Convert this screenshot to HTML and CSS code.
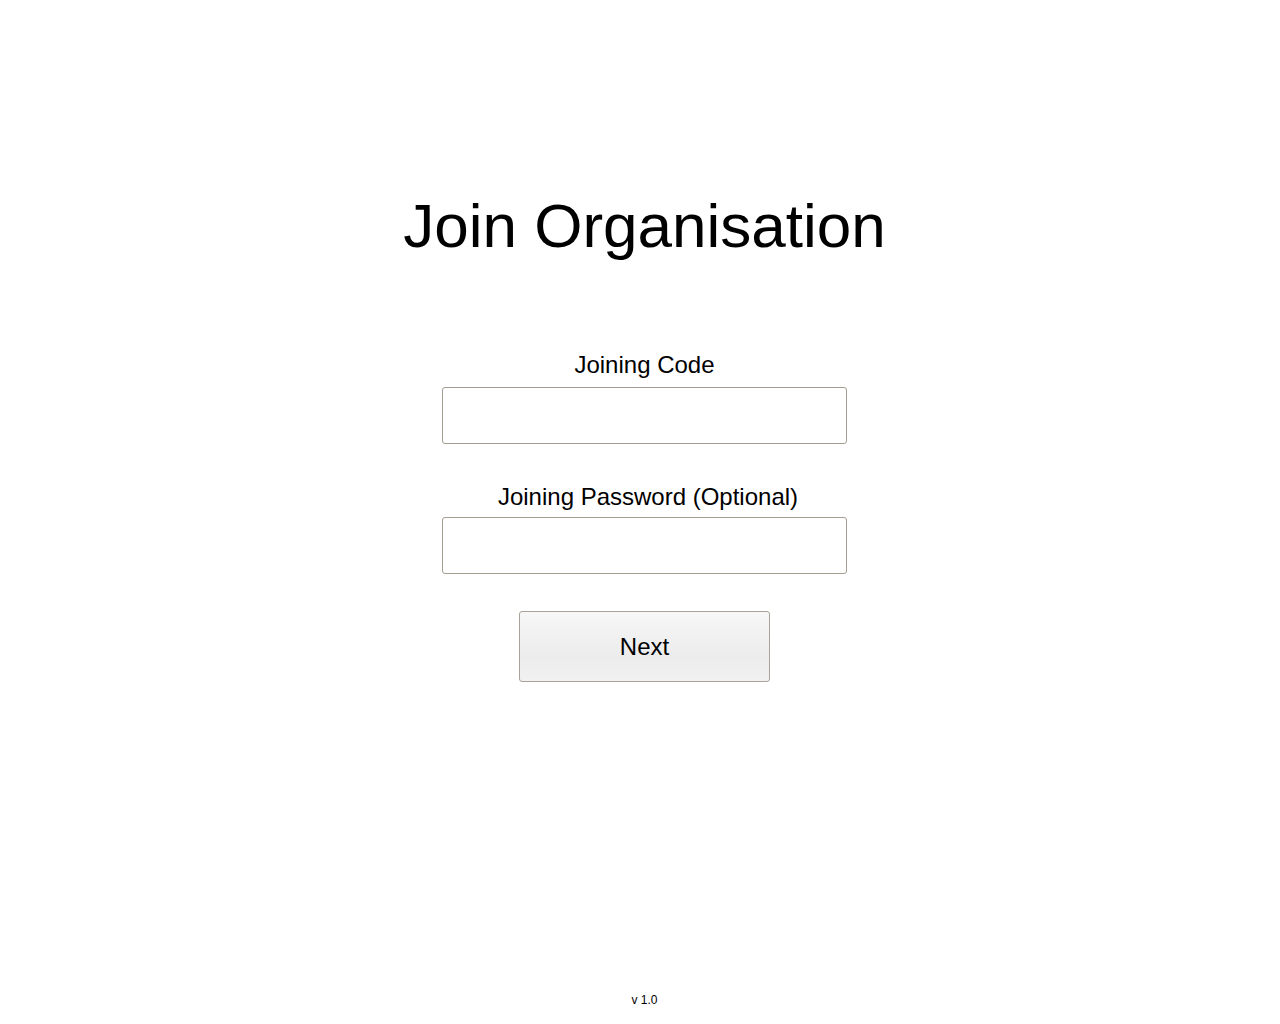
FILE: index.html
```html
<!DOCTYPE html>
<html lang="en">
<head>
  <meta charset="UTF-8">
  <meta name="viewport" content="width=device-width, initial-scale=1.0">
  <title>Join Organisation</title>

  <link rel="stylesheet" href="styles.css">
</head>
<body>
  <div class="JoinWrapper">
    <div class="JoinWrapper-Contents">
      <h1 class="Join-Title">Join Organisation</h1>

      <form class="Join-Form" onsubmit="return false;">
        <label for="joiningCode" class="Join-Form-Label">Joining Code</label>
        <input id="joiningCode" class="Join-Form-Input" type="text">

        <label for="joiningPassword" class="Join-Form-Label Join-Form-Label-Password">Joining Password (Optional)</label>
        <input id="joiningPassword" class="Join-Form-Input" type="password">

        <button id="next" class="Join-Form-Next" type="submit">Next</button>
      </form>
    </div>

    <div class="Join-Version">v 1.0</div>
  </div>
</body>
</html>
```

FILE: styles.css
```css
* {
  margin: 0;
  padding: 0;
  box-sizing: border-box;
  font-family: 'Liberation Sans', Arial, sans-serif;
}

body {
  overflow: hidden;
  background-color: #ffffff;
  color: #000000;
}

.JoinWrapper {
  min-height: 100vh;
  padding-left: 9px;
  display: flex;
  flex-direction: column;
  align-items: center;
}

.JoinWrapper-Contents {
  flex: 1;
  display: flex;
  flex-direction: column;
  align-items: center;
  padding-top: 190px;
}

.Join-Title {
  font-size: 62px;
  line-height: 72px;
  font-weight: normal;
}

.Join-Form {
  margin-top: 89px;
  display: flex;
  flex-direction: column;
  align-items: center;
}

.Join-Form-Label {
  font-size: 24px;
  line-height: 28px;
  margin-bottom: 8px;
}

.Join-Form-Label-Password {
  margin-bottom: 6px;
  padding-left: 7px;
}

.Join-Form-Input {
  width: 405px;
  height: 57px;
  border: 1px solid #a59d90;
  border-radius: 3px;
  outline: none;
  padding: 0 10px;
  font-size: 20px;
  background-color: #ffffff;
}

.Join-Form-Input + .Join-Form-Label {
  margin-top: 39px;
}

.Join-Form-Next {
  margin-top: 37px;
  width: 251px;
  height: 71px;
  border: 1px solid #aaa397;
  border-radius: 3px;
  background: linear-gradient(#f7f7f7, #ececec 65%, #f1f1f1);
  font-size: 24px;
  color: #000000;
  cursor: pointer;
}

.Join-Version {
  font-size: 12px;
  line-height: 14px;
  color: #000000;
  padding-bottom: 17px;
}
```
